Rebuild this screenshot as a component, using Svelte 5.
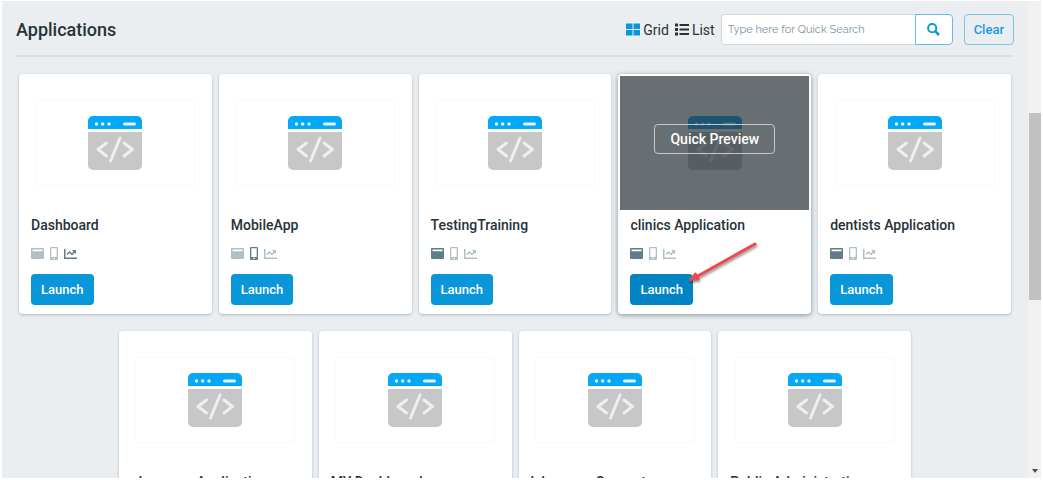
<script>
  let view = $state("grid");
  let search = $state("");

  const apps = [
    { name: "Dashboard", type: "chart" },
    { name: "MobileApp", type: "mobile" },
    { name: "TestingTraining", type: "web" },
    { name: "clinics Application", type: "web", active: true },
    { name: "dentists Application", type: "web" },
    { name: "pharmacy Application", type: "web" },
    { name: "MY Dashboard", type: "chart" },
    { name: "lab career Support", type: "web" },
    { name: "Public Administration", type: "web" }
  ];
</script>

<div class="page">
  <main>
    <header>
      <h1>Applications</h1>
      <div class="tools">
        <button class="view" onclick={() => (view = "grid")}>
          <svg width="14" height="13" viewBox="0 0 14 13" fill="#0a97d9">
            <path d="M0 .5h6.500V6H0zM7.500 .5H14V6H7.500zM0 7h6.500v5.500H0zM7.500 7H14v5.500H7.500z" />
          </svg>
          Grid
        </button>
        <button class="view" onclick={() => (view = "list")}>
          <svg width="14" height="13" viewBox="0 0 14 13" fill="#263238">
            <path d="M0 .5h3v3H0zM0 5h3v3H0zM0 9.500h3v3H0zM4.500 1H14v2H4.500zM4.500 5.500H14v2H4.500zM4.500 10H14v2H4.500z" />
          </svg>
          List
        </button>
        <form class="search" onsubmit={(e) => e.preventDefault()}>
          <input type="text" aria-label="Quick search" placeholder="Type here for Quick Search" bind:value={search} />
          <button class="find" aria-label="Search">
            <svg width="13" height="13" viewBox="0 0 13 13" fill="none" stroke="#0a97d9" stroke-width="2">
              <circle cx="5.200" cy="5.200" r="4.100" />
              <path d="M8.200 8.200l3.800 3.800" stroke-width="2.500" />
            </svg>
          </button>
        </form>
        <button class="clear" onclick={() => (search = "")}>Clear</button>
      </div>
    </header>

    <section class="cards">
      {#each apps as app}
        <article class="card" class:active={app.active}>
          <div class="picture">
            <div class="frame">
              <svg width="54" height="54" viewBox="0 0 54 54">
                <path d="M0 13V5a5 5 0 0 1 5-5h44a5 5 0 0 1 5 5v8z" fill="#03a9f8" />
                <path d="M0 16h54v33a5 5 0 0 1-5 5H5a5 5 0 0 1-5-5z" fill="#c7c7c7" />
                <g fill="#e8f1f5">
                  <circle cx="8.500" cy="8" r="1.700" />
                  <circle cx="14.700" cy="8" r="1.700" />
                  <circle cx="21" cy="8" r="1.700" />
                  <rect x="35" y="6.500" width="13" height="3" rx="1.500" />
                </g>
                <path
                  d="M18.500 27L10 33.500l8.500 6.500M32 22l-9.500 23M36 27l8.500 6.500L36 40"
                  fill="none"
                  stroke="#efefef"
                  stroke-width="3"
                  stroke-linecap="round"
                  stroke-linejoin="round"
                />
              </svg>
            </div>
            {#if app.active}
              <div class="overlay">
                <button class="preview">Quick Preview</button>
              </div>
            {/if}
          </div>
          <div class="body">
            <h2>{app.name}</h2>
            <div class="types">
              <svg class:on={app.type === "web"} width="13" height="13" viewBox="0 0 13 13">
                <path fill-rule="evenodd" d="M1 1h11a1 1 0 0 1 1 1v9a1 1 0 0 1-1 1H1a1 1 0 0 1-1-1V2a1 1 0 0 1 1-1zM1.500 2.500v1.800h10V2.500z" />
              </svg>
              <svg class:on={app.type === "mobile"} width="8" height="13" viewBox="0 0 8 13">
                <path fill-rule="evenodd" d="M1 0h6a1 1 0 0 1 1 1v11a1 1 0 0 1-1 1H1a1 1 0 0 1-1-1V1a1 1 0 0 1 1-1zM1.300 1.300v8.700h5.400V1.300zM3.200 10.800v1.200h1.600v-1.200z" />
              </svg>
              <svg class:on={app.type === "chart"} width="13" height="13" viewBox="0 0 13 13">
                <path d="M0 2h1.500v8.500H13V12H0z" />
                <path d="M8 3h4v4l-1.300-1.300-2.700 2.700-2.500-2.500L3.500 8 2.500 7l3-3L8 6.500l1.500-2z" />
              </svg>
            </div>
            <button class="launch">Launch</button>
          </div>
          {#if app.active}
            <svg class="pointer" width="76" height="46" viewBox="0 0 76 46">
              <path d="M73 5L14 38" stroke="#f2474b" stroke-width="3" stroke-linecap="round" />
              <path d="M8 41l5.500-6.500 3 5.500z" fill="#f2474b" stroke="#f2474b" stroke-width="2" stroke-linejoin="round" />
            </svg>
          {/if}
        </article>
      {/each}
    </section>
  </main>

  <div class="scrollbar" aria-hidden="true">
    <div class="thumb"></div>
    <svg width="6" height="4" viewBox="0 0 6 4"><path d="M0 0h6L3 4z" fill="#505050" /></svg>
  </div>
</div>

<style>
  :global(body) {
    background: #fff;
  }

  .page {
    box-sizing: border-box;
    display: flex;
    height: 100vh;
    padding: 1px 2px 2px;
    overflow: hidden;
    font-family: Roboto, sans-serif;
    color: #263238;
  }

  button,
  input {
    box-sizing: border-box;
    margin: 0;
    font-family: inherit;
  }

  button {
    cursor: pointer;
  }

  main {
    flex: 1;
    min-width: 0;
    padding: 0 14px;
    overflow: hidden;
    background: #eaeef1;
  }

  header {
    display: flex;
    align-items: center;
    justify-content: space-between;
    padding: 13px 0 10px;
    border-bottom: 2px solid #dbe0e3;
  }

  h1 {
    margin: 0;
    font-size: 18px;
    font-weight: 500;
  }

  .tools {
    display: flex;
    align-items: center;
  }

  .view {
    display: flex;
    align-items: center;
    gap: 3px;
    padding: 0;
    margin-right: 6px;
    border: 0;
    background: none;
    color: #263238;
    font-size: 14px;
  }

  .search {
    display: flex;
    margin-right: 11px;
  }

  .search input {
    width: 194px;
    height: 31px;
    padding: 0 6px;
    border: 1px solid #cfd8dc;
    border-right: 0;
    border-radius: 4px 0 0 4px;
    background: #fff;
    font-size: 11px;
  }

  .search input::placeholder {
    color: #8093a0;
    font-family: Raleway, Lato, sans-serif;
  }

  .find {
    display: flex;
    align-items: center;
    justify-content: center;
    width: 38px;
    height: 31px;
    padding: 0;
    border: 1px solid #62bce6;
    border-radius: 0 4px 4px 0;
    background: #fff;
  }

  .clear {
    height: 31px;
    padding: 0 9px;
    border: 1px solid #7cc5e8;
    border-radius: 4px;
    background: none;
    color: #1a9cdb;
    font-size: 13px;
    font-weight: 500;
  }

  .cards {
    display: flex;
    flex-wrap: wrap;
    justify-content: center;
    gap: 17px 7px;
    padding: 17px 3px;
  }

  .card {
    position: relative;
    box-sizing: border-box;
    width: calc((100% - 28px) / 5);
    padding: 2px 2px 9px;
    border-radius: 4px;
    background: #fff;
    box-shadow: 0 1px 3px rgba(84, 110, 122, 0.4);
  }

  .card.active {
    box-shadow: 0 1px 5px rgba(69, 90, 100, 0.65);
  }

  .picture {
    position: relative;
    display: flex;
    align-items: center;
    justify-content: center;
    height: 134px;
  }

  .frame {
    display: flex;
    align-items: center;
    justify-content: center;
    width: 158px;
    height: 84px;
    border: 1px solid #fafafa;
  }

  .overlay {
    position: absolute;
    inset: 0;
    display: flex;
    align-items: center;
    justify-content: center;
    background: rgba(38, 50, 56, 0.7);
  }

  .preview {
    height: 30px;
    padding: 0 15px;
    margin-top: -9px;
    border: 1px solid #c4c8ca;
    border-radius: 4px;
    background: none;
    color: #fff;
    font-size: 14px;
    font-weight: 500;
  }

  .body {
    padding: 5px 10px 0;
  }

  h2 {
    margin: 0;
    font-size: 14px;
    font-weight: 500;
    line-height: 20px;
    white-space: nowrap;
  }

  .types {
    display: flex;
    gap: 6px;
    margin: 12px 0 14px;
    fill: #b0bec5;
  }

  .types .on {
    fill: #607d8b;
  }

  .launch {
    display: block;
    height: 31px;
    padding: 0 10px;
    border: 0;
    border-radius: 4px;
    background: #0a97d9;
    color: #fff;
    font-size: 13px;
    font-weight: 500;
  }

  .active .launch {
    background: #0283c3;
  }

  .pointer {
    position: absolute;
    right: 53px;
    bottom: 29px;
    filter: drop-shadow(1px 2px 1px rgba(0, 0, 0, 0.4));
    pointer-events: none;
  }

  .scrollbar {
    display: flex;
    flex-direction: column;
    align-items: center;
    justify-content: space-between;
    width: 13px;
    padding: 112px 0 5px;
    background: #f1f1f1;
  }

  .thumb {
    width: 12px;
    height: 52%;
    background: #c1c1c1;
  }
</style>
